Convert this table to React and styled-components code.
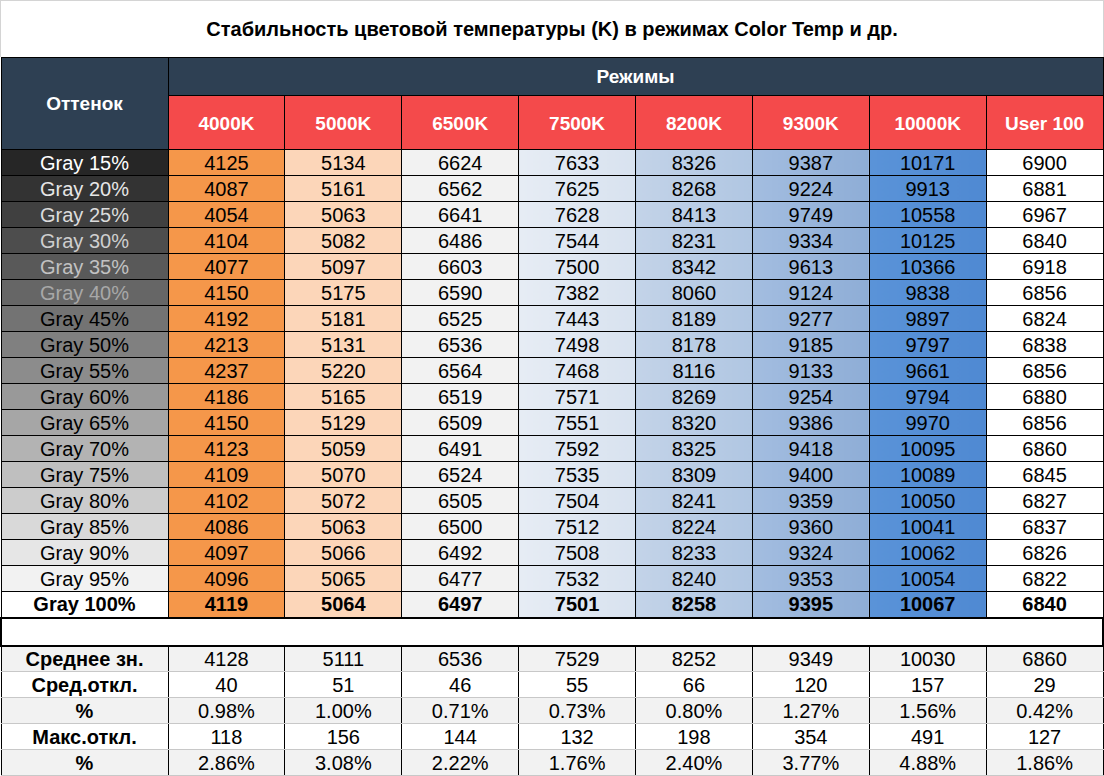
import React from "react";
import styled, { createGlobalStyle } from "styled-components";

const Global = createGlobalStyle`
  html, body { margin: 0; padding: 0; background: #fff; }
  body { font-family: "Liberation Sans", Arial, sans-serif; color: #000; }
`;

const Page = styled.div`
  width: 1104px;
  height: 776px;
  overflow: hidden;
  background: #fff;
`;

const Title = styled.div`
  box-sizing: border-box;
  height: 57px;
  border: 1px solid #d4d4d4;
  border-bottom: none;
  display: flex;
  align-items: center;
  justify-content: center;
  font-weight: bold;
  font-size: 20px;
  padding-top: 1px;
`;

const Table = styled.table`
  width: 1104px;
  border-collapse: collapse;
  table-layout: fixed;
`;

const Row = styled.tr`
  height: ${(p) => p.$h}px;
`;

const HeadCell = styled.th`
  padding: 0;
  border: 1px solid #000;
  color: #fff;
  font-weight: bold;
  font-size: 19px;
  text-align: center;
  background: ${(p) => (p.$red ? "#f44a4b" : "#2e4053")};
  ${(p) => p.$red && "padding-top: 2px;"}
`;

const ShadeCell = styled.td`
  padding: 0;
  border: 1px solid #000;
  font-size: 20px;
  text-align: center;
  line-height: 24px;
  background: ${(p) => p.$bg};
  color: ${(p) => p.$fg};
  font-weight: ${(p) => (p.$bold ? "bold" : "normal")};
`;

const ValueCell = styled.td`
  padding: 0;
  border: 1px solid #000;
  font-size: 20px;
  text-align: center;
  line-height: 24px;
  background: ${(p) => p.$bg};
  font-weight: ${(p) => (p.$bold ? "bold" : "normal")};
`;

const GapCell = styled.td`
  padding: 0;
  border: 2px solid #000;
  background: #fff;
`;

const SumCell = styled.td`
  padding: 0;
  border-left: 1px solid #000;
  border-right: 1px solid #000;
  border-top: 1px solid #c8c8c8;
  border-bottom: 1px solid #c8c8c8;
  font-size: 20px;
  text-align: center;
  line-height: 24px;
  background: ${(p) => (p.$alt ? "#f2f2f2" : "#fff")};
  font-weight: ${(p) => (p.$bold ? "bold" : "normal")};
`;

const modes = ["4000K", "5000K", "6500K", "7500K", "8200K", "9300K", "10000K", "User 100"];

const colBg = [
  "#f5974a",
  "#fcd6b9",
  "#f2f2f2",
  "linear-gradient(90deg, #e6ecf4, #d8e2ef)",
  "linear-gradient(90deg, #c3d3e8, #b0c6e2)",
  "linear-gradient(90deg, #a3bde0, #8eadd6)",
  "linear-gradient(90deg, #5a93d8, #4f89d2)",
  "#ffffff",
];

const rows = [
  [15, 4125, 5134, 6624, 7633, 8326, 9387, 10171, 6900],
  [20, 4087, 5161, 6562, 7625, 8268, 9224, 9913, 6881],
  [25, 4054, 5063, 6641, 7628, 8413, 9749, 10558, 6967],
  [30, 4104, 5082, 6486, 7544, 8231, 9334, 10125, 6840],
  [35, 4077, 5097, 6603, 7500, 8342, 9613, 10366, 6918],
  [40, 4150, 5175, 6590, 7382, 8060, 9124, 9838, 6856],
  [45, 4192, 5181, 6525, 7443, 8189, 9277, 9897, 6824],
  [50, 4213, 5131, 6536, 7498, 8178, 9185, 9797, 6838],
  [55, 4237, 5220, 6564, 7468, 8116, 9133, 9661, 6856],
  [60, 4186, 5165, 6519, 7571, 8269, 9254, 9794, 6880],
  [65, 4150, 5129, 6509, 7551, 8320, 9386, 9970, 6856],
  [70, 4123, 5059, 6491, 7592, 8325, 9418, 10095, 6860],
  [75, 4109, 5070, 6524, 7535, 8309, 9400, 10089, 6845],
  [80, 4102, 5072, 6505, 7504, 8241, 9359, 10050, 6827],
  [85, 4086, 5063, 6500, 7512, 8224, 9360, 10041, 6837],
  [90, 4097, 5066, 6492, 7508, 8233, 9324, 10062, 6826],
  [95, 4096, 5065, 6477, 7532, 8240, 9353, 10054, 6822],
  [100, 4119, 5064, 6497, 7501, 8258, 9395, 10067, 6840],
];

const summary = [
  ["Среднее зн.", ["4128", "5111", "6536", "7529", "8252", "9349", "10030", "6860"]],
  ["Сред.откл.", ["40", "51", "46", "55", "66", "120", "157", "29"]],
  ["%", ["0.98%", "1.00%", "0.71%", "0.73%", "0.80%", "1.27%", "1.56%", "0.42%"]],
  ["Макс.откл.", ["118", "156", "144", "132", "198", "354", "491", "127"]],
  ["%", ["2.86%", "3.08%", "2.22%", "1.76%", "2.40%", "3.77%", "4.88%", "1.86%"]],
];

const textFor = {
  15: "#ffffff",
  20: "#e6e6e6",
  25: "#dcdcdc",
  30: "#cfcfcf",
  35: "#c2c2c2",
  40: "#a8a8a8",
};

function shade(p) {
  const v = Math.round((p / 100) * 255);
  return `rgb(${v},${v},${v})`;
}

export default function App() {
  return (
    <Page>
      <Global />
      <Title>Стабильность цветовой температуры (K) в режимах Color Temp и др.</Title>
      <Table>
        <colgroup>
          <col style={{ width: 167 }} />
          {modes.map((m) => (
            <col key={m} />
          ))}
        </colgroup>
        <thead>
          <Row $h={38}>
            <HeadCell rowSpan={2}>Оттенок</HeadCell>
            <HeadCell colSpan={8}>Режимы</HeadCell>
          </Row>
          <Row $h={54}>
            {modes.map((m) => (
              <HeadCell key={m} $red>
                {m}
              </HeadCell>
            ))}
          </Row>
        </thead>
        <tbody>
          {rows.map(([p, ...vals]) => {
            const bold = p === 100;
            return (
              <Row key={p} $h={26}>
                <ShadeCell $bg={shade(p)} $fg={textFor[p] || "#000"} $bold={bold}>
                  Gray {p}%
                </ShadeCell>
                {vals.map((v, i) => (
                  <ValueCell key={i} $bg={colBg[i]} $bold={bold}>
                    {v}
                  </ValueCell>
                ))}
              </Row>
            );
          })}
          <Row $h={28}>
            <GapCell colSpan={9} />
          </Row>
          {summary.map(([label, vals], r) => (
            <Row key={r} $h={26}>
              <SumCell $alt={r % 2 === 0} $bold>
                {label}
              </SumCell>
              {vals.map((v, i) => (
                <SumCell key={i} $alt={r % 2 === 0}>
                  {v}
                </SumCell>
              ))}
            </Row>
          ))}
        </tbody>
      </Table>
    </Page>
  );
}
